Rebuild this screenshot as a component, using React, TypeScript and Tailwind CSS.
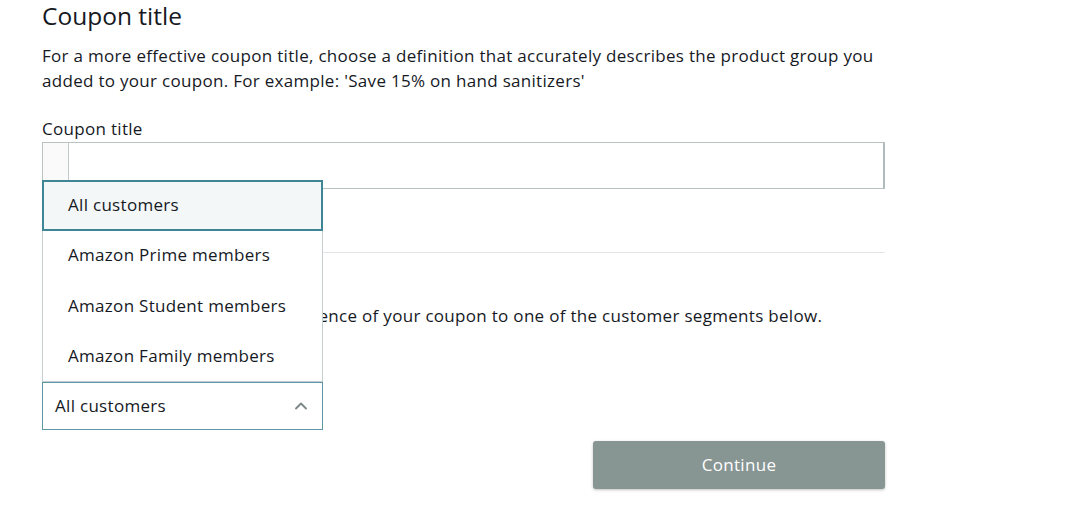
import { ChevronUp } from 'lucide-react';

const SEGMENTS = ['All customers', 'Amazon Prime members', 'Amazon Student members', 'Amazon Family members'];

export default function App() {
  const selected = 'All customers';

  return (
    <div className="min-h-[510px] bg-white text-[#16191f] pl-[42px]" style={{ fontFamily: '"Open Sans", "Noto Sans", sans-serif' }}>
      <div className="w-[843px]">
        <h2 className="text-[24.5px] leading-[32px]">Coupon title</h2>
        <p className="mt-[11px] text-[17px] tracking-[0.3px] leading-[25px]">
          For a more effective coupon title, choose a definition that accurately describes the product group you added to your coupon. For example: 'Save 15% on hand sanitizers'
        </p>
        <label className="block mt-[24px] text-[17px] tracking-[0.3px] leading-[24px]">Coupon title</label>
        <div className="mt-[1px] flex h-[47px] border border-[#b9c2c3] border-r-2 border-r-[#b2bbbc] shadow-[inset_0_1px_2px_rgba(0,0,0,0.08)]">
          <div className="w-[26px] bg-[#fafafa] border-r border-[#c3cbcc]" />
          <input className="flex-1 px-3 outline-none bg-white" />
        </div>

        <div className="mt-[63px] h-px bg-[#e3e6e6]" />

        <h3 className="mt-[18px] text-[18px] leading-[24px]">Customer segment</h3>
        <p className="mt-[8px] text-[17px] tracking-[0.3px] leading-[25px]">
          You can optionally target the audience of your coupon to one of the customer segments below.
        </p>

        <div className="relative mt-[54px] w-[281px]">
          <ul className="absolute bottom-full left-0 w-[281px] bg-white border border-[#c6cdce] z-10 text-[17px] tracking-[0.3px]">
            {SEGMENTS.map(s => (
              <li
                key={s}
                className={
                  s === selected
                    ? 'h-[51px] flex items-center pl-[24px] bg-[#f3f7f7] border-2 border-[#3e8596] -m-px'
                    : 'h-[50.5px] flex items-center pl-[25px]'
                }
              >
                {s}
              </li>
            ))}
          </ul>
          <button className="w-[281px] h-[48px] flex items-center justify-between pl-[12px] pr-[11px] border border-[#5c98a6] bg-white text-[17px] tracking-[0.3px]">
            <span>{selected}</span>
            <ChevronUp className="w-[20px] h-[20px] text-[#7b8788]" strokeWidth={2.25} />
          </button>
        </div>

        <div className="flex justify-end mt-[11px]">
          <button className="w-[292px] h-[48px] rounded-[3px] bg-[#879593] text-white text-[17px] tracking-[0.3px] shadow-[0_1px_3px_rgba(0,0,0,0.25)]">
            Continue
          </button>
        </div>
      </div>
    </div>
  );
}
